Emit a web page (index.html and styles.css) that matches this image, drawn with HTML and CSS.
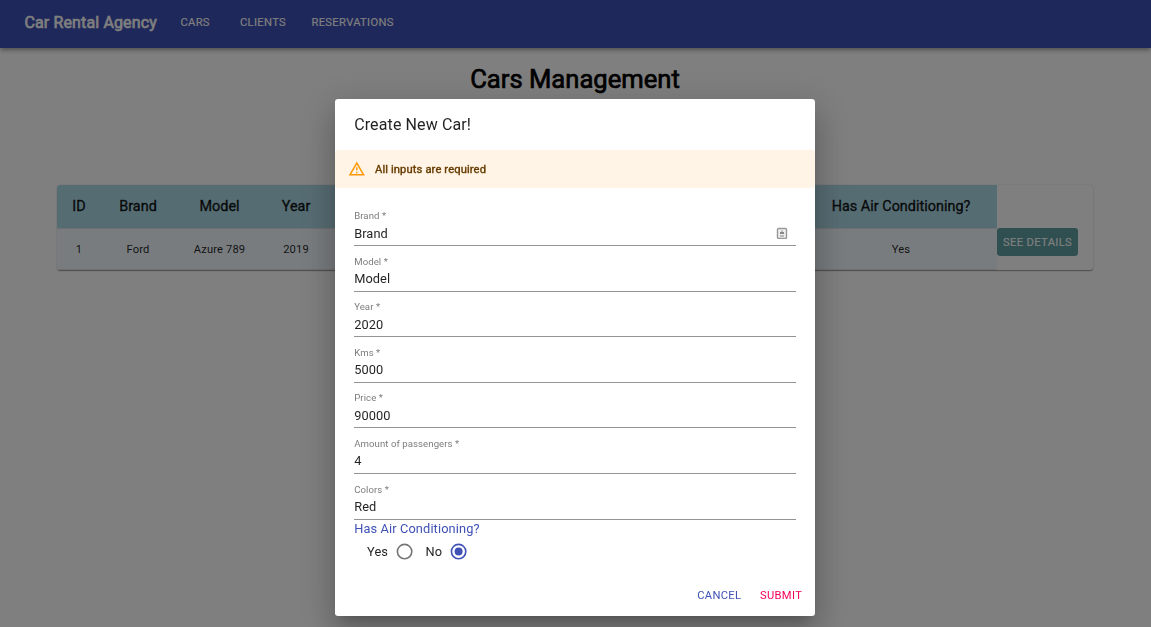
FILE: index.html
```html
<!DOCTYPE html>
<html lang="en">
<head>
<meta charset="utf-8">
<title>Car Rental Agency</title>
<link rel="stylesheet" href="styles.css">
</head>
<body>
<header class="navbar">
  <span class="brand">Car Rental Agency</span>
  <nav class="nav">
    <a class="nav-link">CARS</a>
    <a class="nav-link">CLIENTS</a>
    <a class="nav-link">RESERVATIONS</a>
  </nav>
</header>
<main class="page">
  <h1 class="page-title">Cars Management</h1>
  <div class="paper">
    <div class="row head">
      <div class="cell">ID</div><div class="cell">Brand</div><div class="cell">Model</div><div class="cell">Year</div><div class="cell"></div><div class="cell">Has Air Conditioning?</div>
    </div>
    <div class="row">
      <div class="cell">1</div><div class="cell">Ford</div><div class="cell">Azure 789</div><div class="cell">2019</div><div class="cell"></div><div class="cell">Yes</div>
      <button class="details">SEE DETAILS</button>
    </div>
  </div>
</main>
<div class="backdrop">
  <section class="dialog" role="dialog">
    <h2 class="dialog-title">Create New Car!</h2>
    <div class="alert">
      <svg class="alert-icon" viewBox="0 0 24 24"><path d="M12 5.99L19.53 19H4.47L12 5.99M12 2L1 21h22L12 2zm1 14h-2v2h2v-2zm0-6h-2v4h2v-4z"/></svg>
      <span class="alert-text">All inputs are required</span>
    </div>
    <form class="form">
      <div class="field"><label class="label">Brand *</label><div class="value">Brand
        <svg class="autofill" viewBox="0 0 12 12"><rect x="1.5" y="1.5" width="9" height="10" rx="1"/><path class="glyph" d="M5.5 3.5h1V5H8v2H4V5h1.5zM4 8.500h4v1H4z"/></svg></div></div>
      <div class="field"><label class="label">Model *</label><div class="value">Model</div></div>
      <div class="field"><label class="label">Year *</label><div class="value">2020</div></div>
      <div class="field"><label class="label">Kms *</label><div class="value">5000</div></div>
      <div class="field"><label class="label">Price *</label><div class="value">90000</div></div>
      <div class="field"><label class="label">Amount of passengers *</label><div class="value">4</div></div>
      <div class="field"><label class="label">Colors *</label><div class="value">Red</div></div>
      <div class="legend">Has Air Conditioning?</div>
      <div class="radios">
        <label class="option">Yes<svg class="radio" viewBox="0 0 24 24"><circle class="ring" cx="12" cy="12" r="9"/></svg></label>
        <label class="option">No<svg class="radio checked" viewBox="0 0 24 24"><circle class="ring" cx="12" cy="12" r="9"/><circle class="dot" cx="12" cy="12" r="5"/></svg></label>
      </div>
    </form>
    <div class="actions">
      <button class="action">CANCEL</button>
      <button class="action submit">SUBMIT</button>
    </div>
  </section>
</div>
</body>
</html>
```
FILE: styles.css
```css
* { box-sizing: border-box; }
body { margin: 0; height: 627px; overflow: hidden; background: #fff; color: #000; font-family: Roboto, sans-serif; }
button { border: 0; background: none; font-family: inherit; }

.navbar { position: relative; display: flex; align-items: center; height: 48px; padding: 0 24px 3px; background: #3f51b5; color: #fff;
  box-shadow: 0 1.6px 3.2px -0.8px rgba(0,0,0,.2), 0 3.2px 4px rgba(0,0,0,.14), 0 0.8px 8px rgba(0,0,0,.12); }
.brand { width: 156.4px; padding-left: .4px; font-size: 16px; font-weight: 400; letter-spacing: .14px; -webkit-text-stroke: .6px currentColor; white-space: nowrap; }
.nav { display: flex; gap: 25px; }
.nav-link { min-width: 34px; font-size: 11.2px; font-weight: 400; letter-spacing: .33px; -webkit-text-stroke: .1px currentColor; }
.nav-link:first-child { margin-right: .6px; }
.nav-link:last-child { margin-left: .4px; }

.page { display: flex; flex-direction: column; align-items: center; padding-right: 1px; }
.page-title { margin: 16px 0 0; font-size: 25.6px; line-height: 30px; font-weight: 400; -webkit-text-stroke: .7px currentColor; }
.paper { width: 1036px; height: 85px; margin: 91px 0 0; border-radius: 3.2px; background: #fff;
  box-shadow: 0 1.6px .8px -.8px rgba(0,0,0,.2), 0 .8px .8px rgba(0,0,0,.14), 0 .8px 2.4px rgba(0,0,0,.12); }
.row { display: grid; grid-template-columns: 44px 74px 89px 64px 477px 192px 81px; height: 41px; color: rgba(0,0,0,.87); font-size: 11.2px; letter-spacing: .12px; }
.cell { display: flex; align-items: center; justify-content: center; background: #f0f8ff; border-bottom: 1px solid #e0e0e0; }
.head { height: 44px; font-size: 14.4px; letter-spacing: .02px; -webkit-text-stroke: .4px currentColor; }
.head .cell { background: #add8e6; }
.head .cell:first-child { border-top-left-radius: 3.2px; }
.details { height: 28px; margin-top: -1px; padding: 0; border-radius: 3.2px; background: #5f9ea0; color: #fff; font-size: 11.2px; font-weight: 400; letter-spacing: .36px; -webkit-text-stroke: .1px currentColor; }

.backdrop { position: fixed; inset: 0; display: flex; justify-content: center; align-items: flex-start; padding: 99px 1px 0 0; background: rgba(0,0,0,.5); }
.dialog { width: 480px; height: 517px; display: flex; flex-direction: column; border-radius: 3.2px; background: #fff; color: rgba(0,0,0,.87);
  box-shadow: 0 8.8px 12px -5.6px rgba(0,0,0,.2), 0 19.2px 30.4px 2.4px rgba(0,0,0,.14), 0 7.2px 36.8px 6.4px rgba(0,0,0,.12); }
.dialog-title { margin: 0; padding: 12.8px 19.2px; font-size: 16px; line-height: 25.6px; font-weight: 400; letter-spacing: .12px; }
.alert { display: flex; align-items: center; height: 37.6px; padding: 0 12.8px; border-radius: 3.2px; background: #fff4e5; color: #663c00; }
.alert-icon { width: 17.6px; height: 17.6px; margin-right: 9.6px; fill: #ff9800; }
.alert-text { padding-top: 1.5px; font-size: 11.2px; letter-spacing: .12px; -webkit-text-stroke: .4px currentColor; }
.form { padding: 15.8px 19.2px 0; }
.field { display: flow-root; height: 45.6px; padding: 6.4px 0 3.2px; }
.label { display: block; height: 12.8px; font-size: 9.6px; line-height: 12px; letter-spacing: .07px; color: rgba(0,0,0,.54); }
.value { display: flex; align-items: center; justify-content: space-between; height: 23.2px; padding: 0 8px 1.7px 0; border-bottom: 1px solid rgba(0,0,0,.42); font-size: 12.8px; letter-spacing: .06px; }
.autofill { width: 12px; height: 12px; fill: #eee; stroke: #999; stroke-width: 1.4; }
.glyph { fill: #888; stroke: none; }
.legend { margin-top: -.8px; color: #3f51b5; font-size: 12.8px; line-height: 13px; letter-spacing: .12px; }
.radios { display: flex; gap: 11.4px; padding: 7px 0 0 12.8px; }
.option { display: flex; align-items: center; gap: 7px; font-size: 12.8px; letter-spacing: .12px; }
.radio { width: 19.2px; height: 19.2px; }
.ring { fill: none; stroke: rgba(0,0,0,.54); stroke-width: 2; }
.checked .ring { stroke: #3f51b5; }
.dot { fill: #3f51b5; }
.actions { display: flex; justify-content: flex-end; gap: 18.6px; margin-top: auto; padding: 0 12.8px 12.5px; }
.action { padding: 0; font-size: 11.2px; line-height: 16px; letter-spacing: .33px; color: #3f51b5; }
.submit { color: #f50057; }
```
